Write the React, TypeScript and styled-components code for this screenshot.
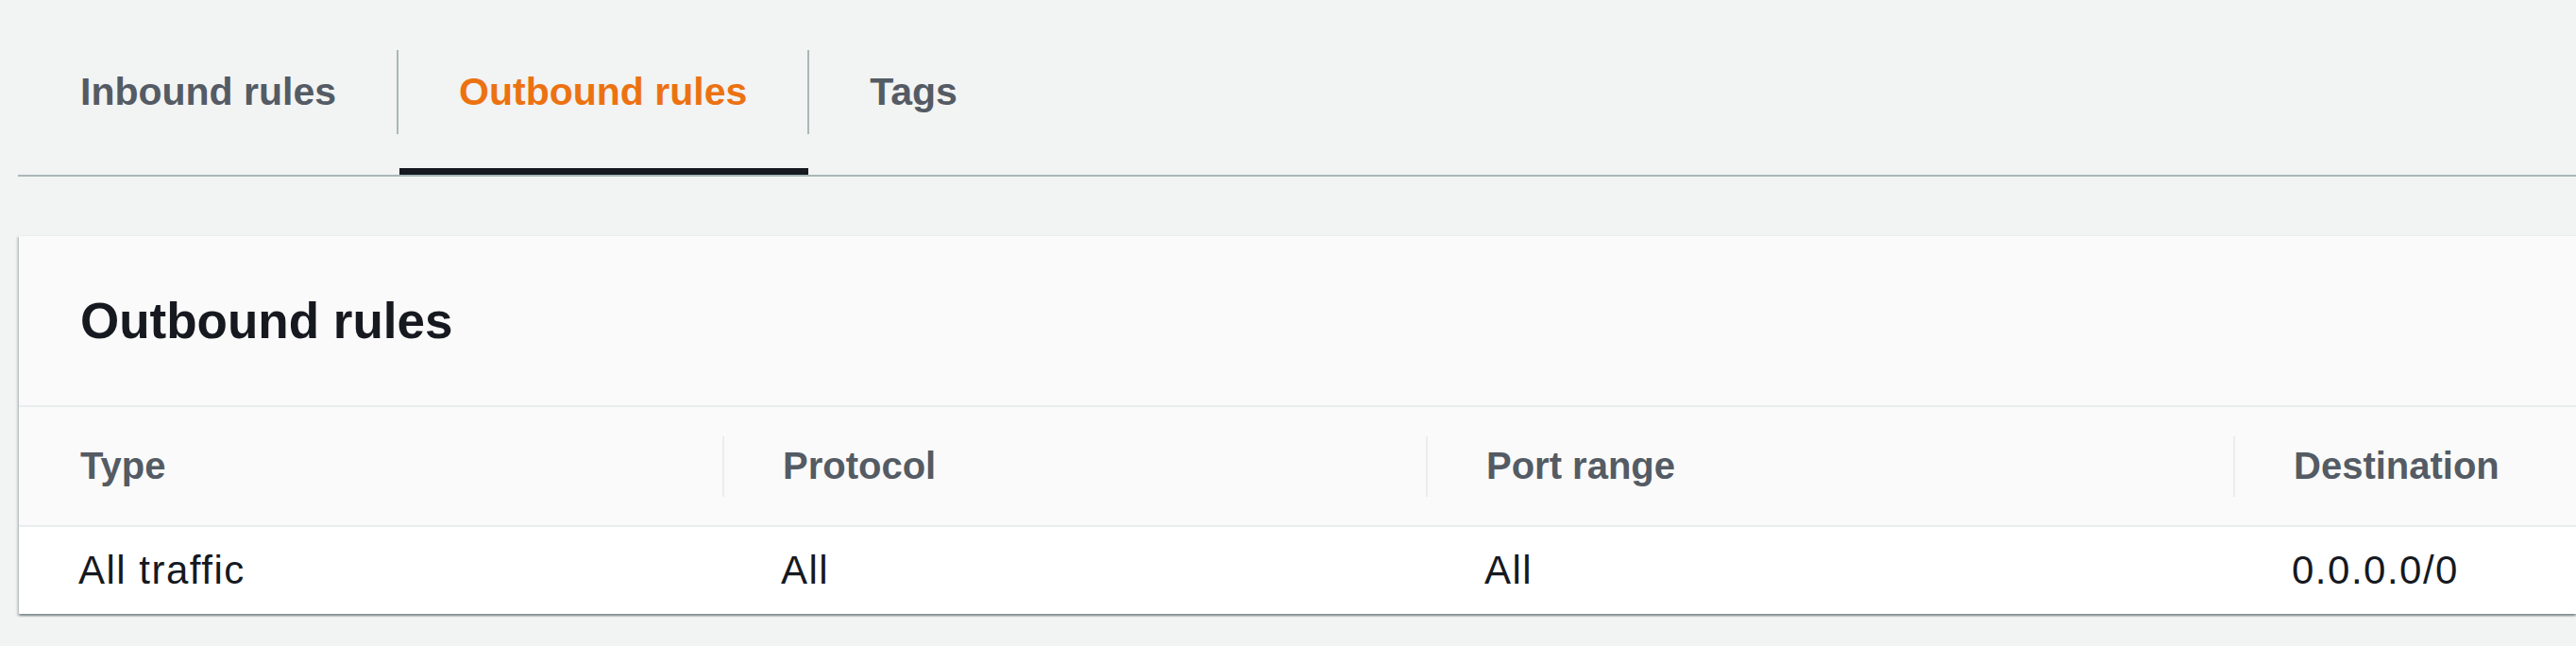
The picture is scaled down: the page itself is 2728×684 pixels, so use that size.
import React from "react";
import styled, { createGlobalStyle } from "styled-components";

const GlobalStyle = createGlobalStyle`
  html, body {
    margin: 0;
    padding: 0;
    background: #f2f3f3;
    font-family: "Liberation Sans", Arial, sans-serif;
    overflow: hidden;
  }
`;

const Page = styled.div`
  height: 684px;
  padding-left: 20px;
  background: #f2f3f3;
`;

const TabList = styled.div`
  display: flex;
  padding-top: 53px;
  border-bottom: 2px solid #aab7b8;
  margin-left: -1px;
`;

const Tab = styled.div<{ $active?: boolean; $first?: boolean }>`
  position: relative;
  display: flex;
  align-items: center;
  height: 89px;
  margin-bottom: 43px;
  padding: 0 64px;
  border-left: 2px solid ${(p) => (p.$first ? "transparent" : "#aab7b8")};
  font-size: 41px;
  font-weight: 700;
  color: ${(p) => (p.$active ? "#ec7211" : "#545b64")};

  ${(p) =>
    p.$active &&
    `
    &::after {
      content: "";
      position: absolute;
      left: 1px;
      right: -1px;
      bottom: -43px;
      height: 7px;
      background: #16191f;
    }
  `}
`;

const Card = styled.div`
  margin-top: 62px;
  background: #fafafa;
  box-shadow: 0 2px 2px rgba(0, 28, 36, 0.3), 2px 2px 2px rgba(0, 28, 36, 0.15),
    -2px 2px 2px rgba(0, 28, 36, 0.15);
  border-top: 1px solid #eaeded;
`;

const CardHeader = styled.div`
  display: flex;
  align-items: center;
  height: 179px;
  padding-left: 65px;
  border-bottom: 2px solid #eaeded;
`;

const Heading = styled.h2`
  margin: 0;
  font-size: 53px;
  font-weight: 700;
  color: #16191f;
`;

const Row = styled.div<{ $head?: boolean }>`
  display: grid;
  grid-template-columns: 745px 745px 855px 1fr;
  align-items: center;
  height: ${(p) => (p.$head ? "125px" : "92px")};
  background: ${(p) => (p.$head ? "#fafafa" : "#ffffff")};
  border-bottom: ${(p) => (p.$head ? "2px solid #eaeded" : "none")};
`;

const HeadCell = styled.div<{ $divider?: boolean }>`
  display: flex;
  align-items: center;
  height: 64px;
  padding-left: ${(p) => (p.$divider ? "62px" : "65px")};
  border-left: ${(p) => (p.$divider ? "2px solid #eaeded" : "none")};
  font-size: 40px;
  font-weight: 700;
  color: #545b64;
`;

const Cell = styled.div<{ $first?: boolean }>`
  padding-left: ${(p) => (p.$first ? "63px" : "62px")};
  font-size: 42px;
  letter-spacing: 1.5px;
  color: #16191f;
`;

const columns = ["Type", "Protocol", "Port range", "Destination"];
const rules = [["All traffic", "All", "All", "0.0.0.0/0"]];

export default function App() {
  return (
    <Page>
      <GlobalStyle />
      <TabList>
        <Tab $first>Inbound rules</Tab>
        <Tab $active>Outbound rules</Tab>
        <Tab>Tags</Tab>
      </TabList>

      <Card>
        <CardHeader>
          <Heading>Outbound rules</Heading>
        </CardHeader>
        <Row $head>
          {columns.map((c, i) => (
            <HeadCell key={c} $divider={i > 0}>
              {c}
            </HeadCell>
          ))}
        </Row>
        {rules.map((r, ri) => (
          <Row key={ri}>
            {r.map((v, i) => (
              <Cell key={i} $first={i === 0}>
                {v}
              </Cell>
            ))}
          </Row>
        ))}
      </Card>
    </Page>
  );
}
